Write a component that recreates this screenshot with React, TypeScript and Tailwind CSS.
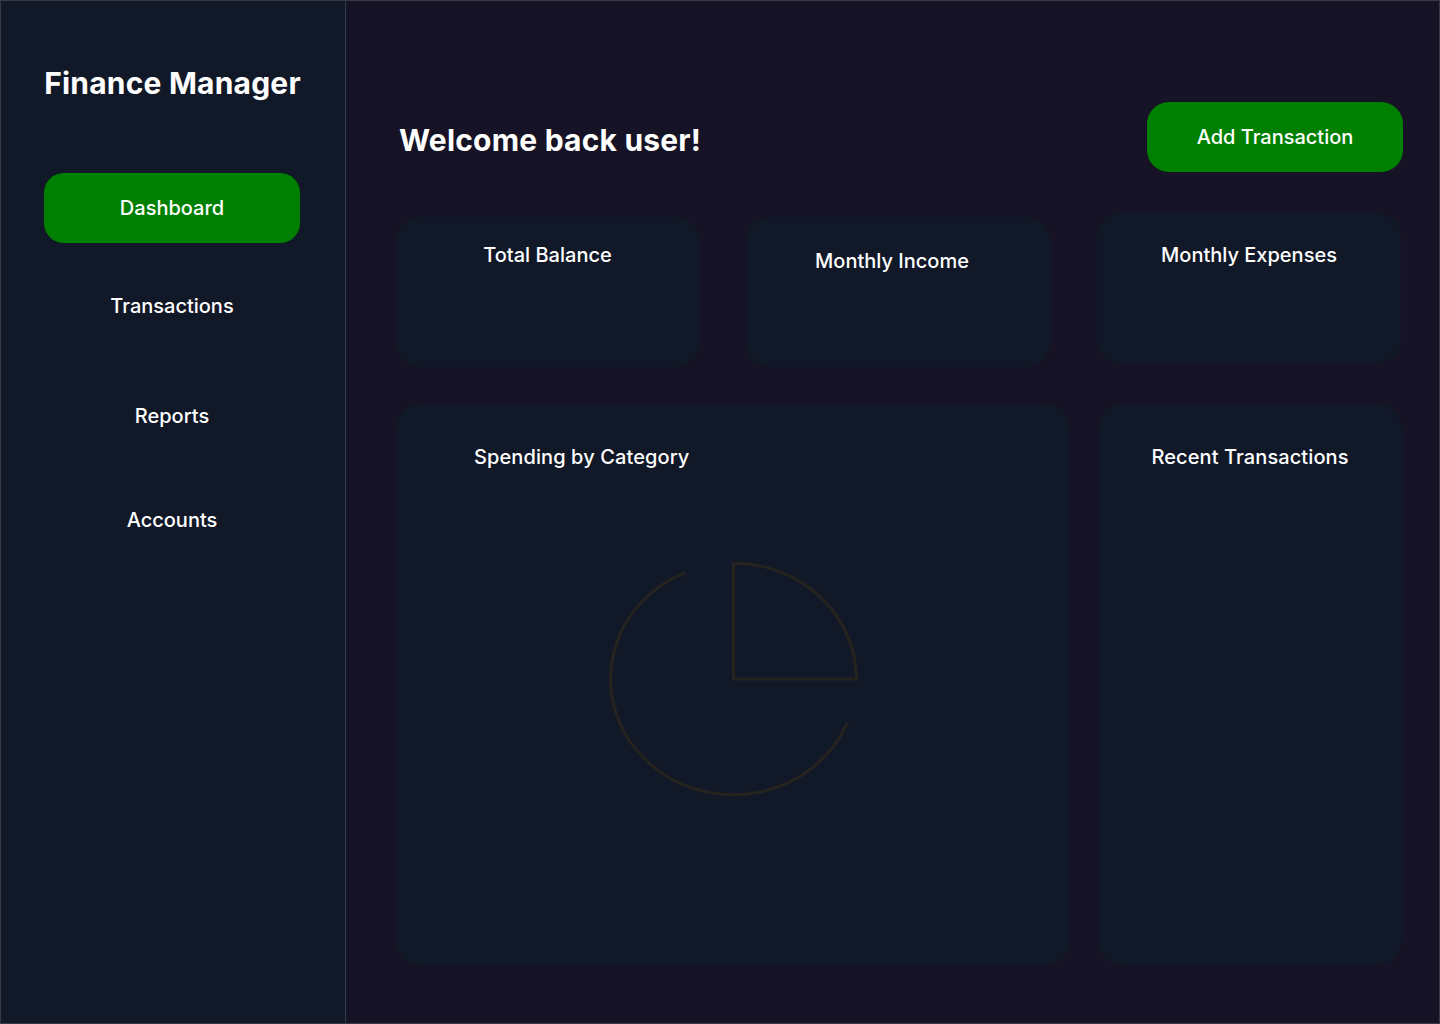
function StatCard({ title, className }: { title: string; className?: string }) {
  return (
    <div className={`h-[150px] rounded-[24px] bg-[#111827] ${className ?? ''}`}>
      <h3 className="text-center text-xl font-medium text-white">{title}</h3>
    </div>
  )
}

function PieIcon() {
  return (
    <svg width="295" height="278" viewBox="0 0 24 24" preserveAspectRatio="none" fill="none" stroke="#25231f" strokeWidth="0.26" strokeLinecap="round" strokeLinejoin="miter">
      <path d="M21.21 15.89A10 10 0 1 1 8 2.83" />
      <path d="M22 12A10 10 0 0 0 12 2v10z" />
    </svg>
  )
}

export default function App() {
  const navItems = [
    { label: 'Transactions', mt: 'mt-[28px]' },
    { label: 'Reports', mt: 'mt-[40px]' },
    { label: 'Accounts', mt: 'mt-[34px]' },
  ]

  return (
    <div
      className="flex h-screen w-screen overflow-hidden border border-[#363948] bg-[#151325] text-white"
      style={{ fontFamily: 'Inter, "Noto Sans", sans-serif' }}
    >
      {/* Sidebar */}
      <aside className="flex w-[345px] shrink-0 flex-col items-center border-r border-[#3a3d4f] bg-[#111827] pr-[2px] pt-16">
        <h1 className="pl-[1px] text-[30px] font-bold leading-9 tracking-[0.2px]">Finance Manager</h1>
        <nav className="mt-[72px] flex w-full flex-col items-center">
          <button className="h-[70px] w-[256px] rounded-[20px] bg-[#008000] text-xl font-medium text-white">
            Dashboard
          </button>
          {navItems.map((item) => (
            <button
              key={item.label}
              className={`${item.mt} h-[70px] w-[256px] text-xl font-medium text-white`}
            >
              {item.label}
            </button>
          ))}
        </nav>
      </aside>

      {/* Main */}
      <main className="flex flex-1 flex-col pl-[50px] pr-[36px] pt-[101px]">
        <div className="flex items-center justify-between">
          <h2 className="pl-[3px] pt-[5px] text-[30px] font-bold leading-10 tracking-[0.2px]">Welcome back user!</h2>
          <button className="h-[70px] w-[256px] rounded-[22px] bg-[#008000] text-xl font-medium text-white">
            Add Transaction
          </button>
        </div>

        <div className="mt-[41px] grid grid-cols-[303px_304px_304px] items-start gap-x-[47px]">
          <StatCard title="Total Balance" className="mt-1 pt-6" />
          <StatCard title="Monthly Income" className="mt-1 pt-[30px] pr-3" />
          <StatCard title="Monthly Expenses" className="pt-7" />
        </div>

        <div className="mt-[37px] grid grid-cols-[674px_304px] gap-x-[28px]">
          <div className="flex h-[561px] flex-col rounded-[24px] bg-[#111827] pt-[39px]">
            <h3 className="pl-[78px] text-xl font-medium tracking-[0.1px]">Spending by Category</h3>
            <div className="flex flex-1 items-center justify-center pb-[78px]">
              <PieIcon />
            </div>
          </div>
          <div className="h-[561px] rounded-[24px] bg-[#111827] pt-[39px]">
            <h3 className="text-center text-xl font-medium tracking-[0.1px]">Recent Transactions</h3>
          </div>
        </div>
      </main>
    </div>
  )
}
